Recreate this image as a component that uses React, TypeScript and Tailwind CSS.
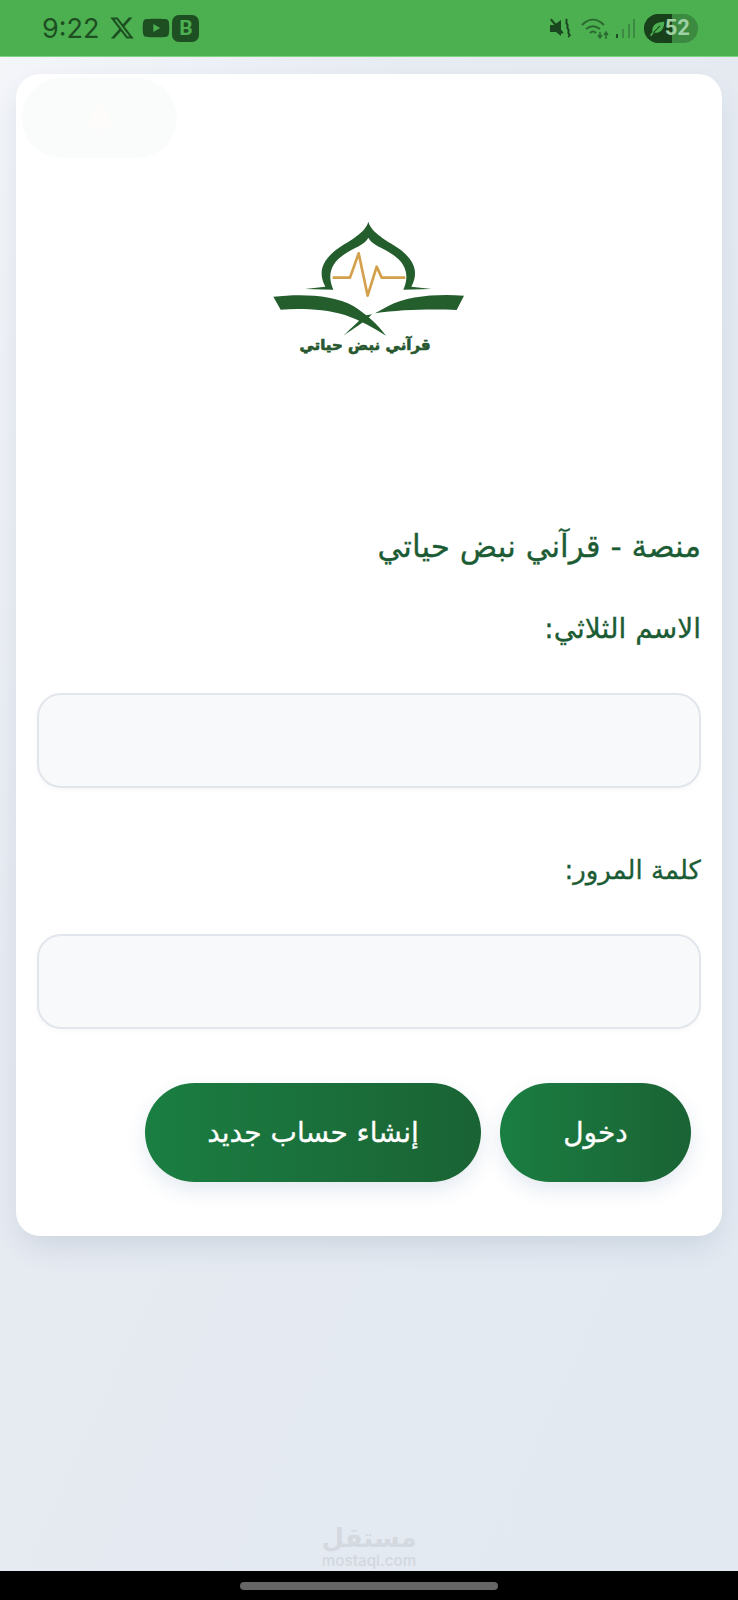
import { FaXTwitter, FaYoutube, FaBell } from "react-icons/fa6";

const arabic = "font-['DejaVu_Sans','Noto_Sans',sans-serif]";

function Logo() {
  return (
    <div className="flex justify-center pr-[8px]">
      <svg viewBox="0 0 690 510" className="w-[230px] h-[170px] block">
        {/* dome */}
        <path
          fill="#245e2d"
          d="M355 50 C365 85 410 105 445 130 C488 160 510 198 484 245 L545 252 L460 254 C480 210 466 175 430 150 C400 128 365 120 355 98 C345 120 310 128 280 150 C244 175 230 210 250 254 L165 252 L226 245 C200 198 222 160 265 130 C300 105 345 85 355 50Z"
        />
        {/* pulse line */}
        <path
          fill="none"
          stroke="#d3a04b"
          strokeWidth="8"
          strokeLinejoin="round"
          d="M248 218 H300 L326 145 L353 272 L380 185 L395 218 H466"
        />
        {/* open book */}
        <path
          fill="#245e2d"
          d="M70 275 C150 266 250 268 310 303 C350 328 385 360 408 392 C370 367 330 346 285 330 C225 312 150 310 92 314Z"
        />
        <path fill="#245e2d" d="M642 272 C560 266 470 273 415 303 L375 325 C450 314 540 312 620 315Z" />
        <path fill="#245e2d" d="M366 328 C345 350 310 372 280 392 C305 368 325 350 342 332Z" />
        <text
          x="345"
          y="434"
          textAnchor="middle"
          direction="rtl"
          fill="#28582f"
          stroke="#28582f"
          strokeWidth="2"
          fontSize="45"
          fontWeight="700"
          fontFamily="DejaVu Sans, sans-serif"
        >
          قرآني نبض حياتي
        </text>
      </svg>
    </div>
  );
}

function StatusBar() {
  return (
    <div className="h-[57px] bg-[#4caf50] border-b border-[#7fd483] flex items-center justify-between pl-[42px] pr-[40px] text-[#1d4f22]">
      <div className="flex items-center">
        <span className="text-[27px] font-['Inter',sans-serif] leading-none mr-[10px]">9:22</span>
        <FaXTwitter className="w-[26px] h-[26px] mr-[7px]" />
        <FaYoutube className="w-[28px] h-[28px] mr-[2px]" />
        <span className="w-[27px] h-[27px] rounded-[7px] bg-[#1d4f22] text-[#4caf50] flex items-center justify-center text-[21px] font-bold font-['Roboto',sans-serif] leading-none">
          B
        </span>
      </div>
      <div className="flex items-center">
        <svg viewBox="0 0 24 24" className="w-[24px] h-[24px] mr-[8px]" fill="#1a471f">
          <path d="M2 9h4l7-5v16l-5-4H2z" />
          <path d="M2 4l1.500-1.500 12 14L14 18z" />
          <path d="M18 3c2 2 -1 3 1 5s-1 3 1 5-1 3 1 5 -1 2 0 3" fill="none" stroke="#1a471f" strokeWidth="2" />
        </svg>
        <svg viewBox="0 0 30 24" className="w-[30px] h-[24px] mr-[5px]" fill="none" stroke="#2a6a30" strokeWidth="2">
          <path d="M2 9c7-7 15-7 22 0" />
          <path d="M6 13c5-4 9-4 14 0" />
          <path d="M10 17c2-2 4-2 6 0" />
          <path d="M20 23v-7m-2 3 2 3 2-3M26 23v-7m-2 3 2-3 2 3" strokeWidth="1.500" />
        </svg>
        <svg viewBox="0 0 20 22" className="w-[20px] h-[22px] mr-[9px]" fill="#3d8a42">
          <rect x="1" y="17" width="2" height="4" fill="#1d4f22" />
          <rect x="7" y="12" width="2" height="9" />
          <rect x="13" y="7" width="2" height="14" />
          <rect x="18" y="2" width="2" height="19" />
        </svg>
        <div className="relative w-[54px] h-[29px] rounded-full bg-[#3b8a40] overflow-hidden flex items-center justify-end pr-[8px]">
          <div className="absolute left-0 top-0 bottom-0 w-[28px] bg-[#17401b]">
            <svg viewBox="0 0 20 20" className="absolute left-[5px] top-[6px] w-[17px] h-[17px]" fill="#4caf50">
              <path d="M18 2C9 2 3 6 4 14L1 18l1.500 1L6 15c8 1 12-5 12-13z" />
              <path d="M5 15 13 7" stroke="#17401b" strokeWidth="1.200" />
            </svg>
          </div>
          <span className="relative text-[#9fd0a2] text-[22px] font-bold font-['Roboto',sans-serif] leading-none">52</span>
        </div>
      </div>
    </div>
  );
}

function Field({ label, size }: { label: string; size: string }) {
  return (
    <div className="flex flex-col">
      <label className={`${size} leading-[38px] text-[#1c5c34] [-webkit-text-stroke:0.3px]`}>{label}</label>
      <input
        type="text"
        className="mt-[45px] h-[95px] w-full rounded-[24px] border-2 border-[#e2e6ec] bg-[#f8f9fb] shadow-[0_2px_6px_rgba(0,0,0,0.03)]"
      />
    </div>
  );
}

export default function App() {
  return (
    <div dir="rtl" className={`relative min-h-[1600px] flex flex-col bg-gradient-to-br from-[#f4f6fa] via-[#e7ebf2] via-30% to-[#e2e9f1] ${arabic}`}>
      <div dir="ltr">
        <StatusBar />
      </div>

      <main className="flex-1 pt-[17px] px-[16px]">
        <div className="relative w-[706px] h-[1162px] bg-white rounded-[24px] shadow-[0_14px_30px_-6px_rgba(60,90,120,0.16)] pt-[131px] px-[21px]">
          <div className="absolute left-[6px] top-[4px] w-[155px] h-[80px] rounded-[40px] bg-[#fafcfb] flex items-center justify-center">
            <FaBell className="w-[30px] h-[30px] text-[#fdfcfa]" />
          </div>

          <Logo />

          <h1 className="mt-[149px] text-[31px] leading-[44px] text-[#1c5c34] [-webkit-text-stroke:0.3px]">
            منصة - قرآني نبض حياتي
          </h1>

          <div className="mt-[42px] flex flex-col gap-[63px]">
            <Field label="الاسم الثلاثي:" size="text-[28px]" />
            <Field label="كلمة المرور:" size="text-[26px]" />
          </div>

          <div className="mt-[54px] flex gap-[19px] pr-[10px]">
            <button className="w-[191px] h-[99px] rounded-[50px] bg-gradient-to-r from-[#1a7e42] to-[#1a6334] text-white text-[28px] [-webkit-text-stroke:0.3px] shadow-[0_8px_20px_rgba(30,80,140,0.12)]">
              دخول
            </button>
            <button className="w-[336px] h-[99px] rounded-[50px] bg-gradient-to-r from-[#1a7e42] to-[#1a6334] text-white text-[28px] [-webkit-text-stroke:0.3px] shadow-[0_8px_20px_rgba(30,80,140,0.12)]">
              إنشاء حساب جديد
            </button>
          </div>
        </div>
      </main>

      {/* watermark over the page */}
      <div className="absolute left-0 right-0 top-[1522px] flex flex-col items-center text-[#d4d9e0] leading-none">
        <span className="text-[26px] font-bold leading-[32px]">مستقل</span>
        <span dir="ltr" className="text-[15px] font-semibold font-['Inter',sans-serif] leading-[14px]">mostaql.com</span>
      </div>

      <div className="h-[29px] bg-black flex items-center justify-center">
        <div className="w-[258px] h-[8px] rounded-full bg-[#666666]" />
      </div>
    </div>
  );
}
